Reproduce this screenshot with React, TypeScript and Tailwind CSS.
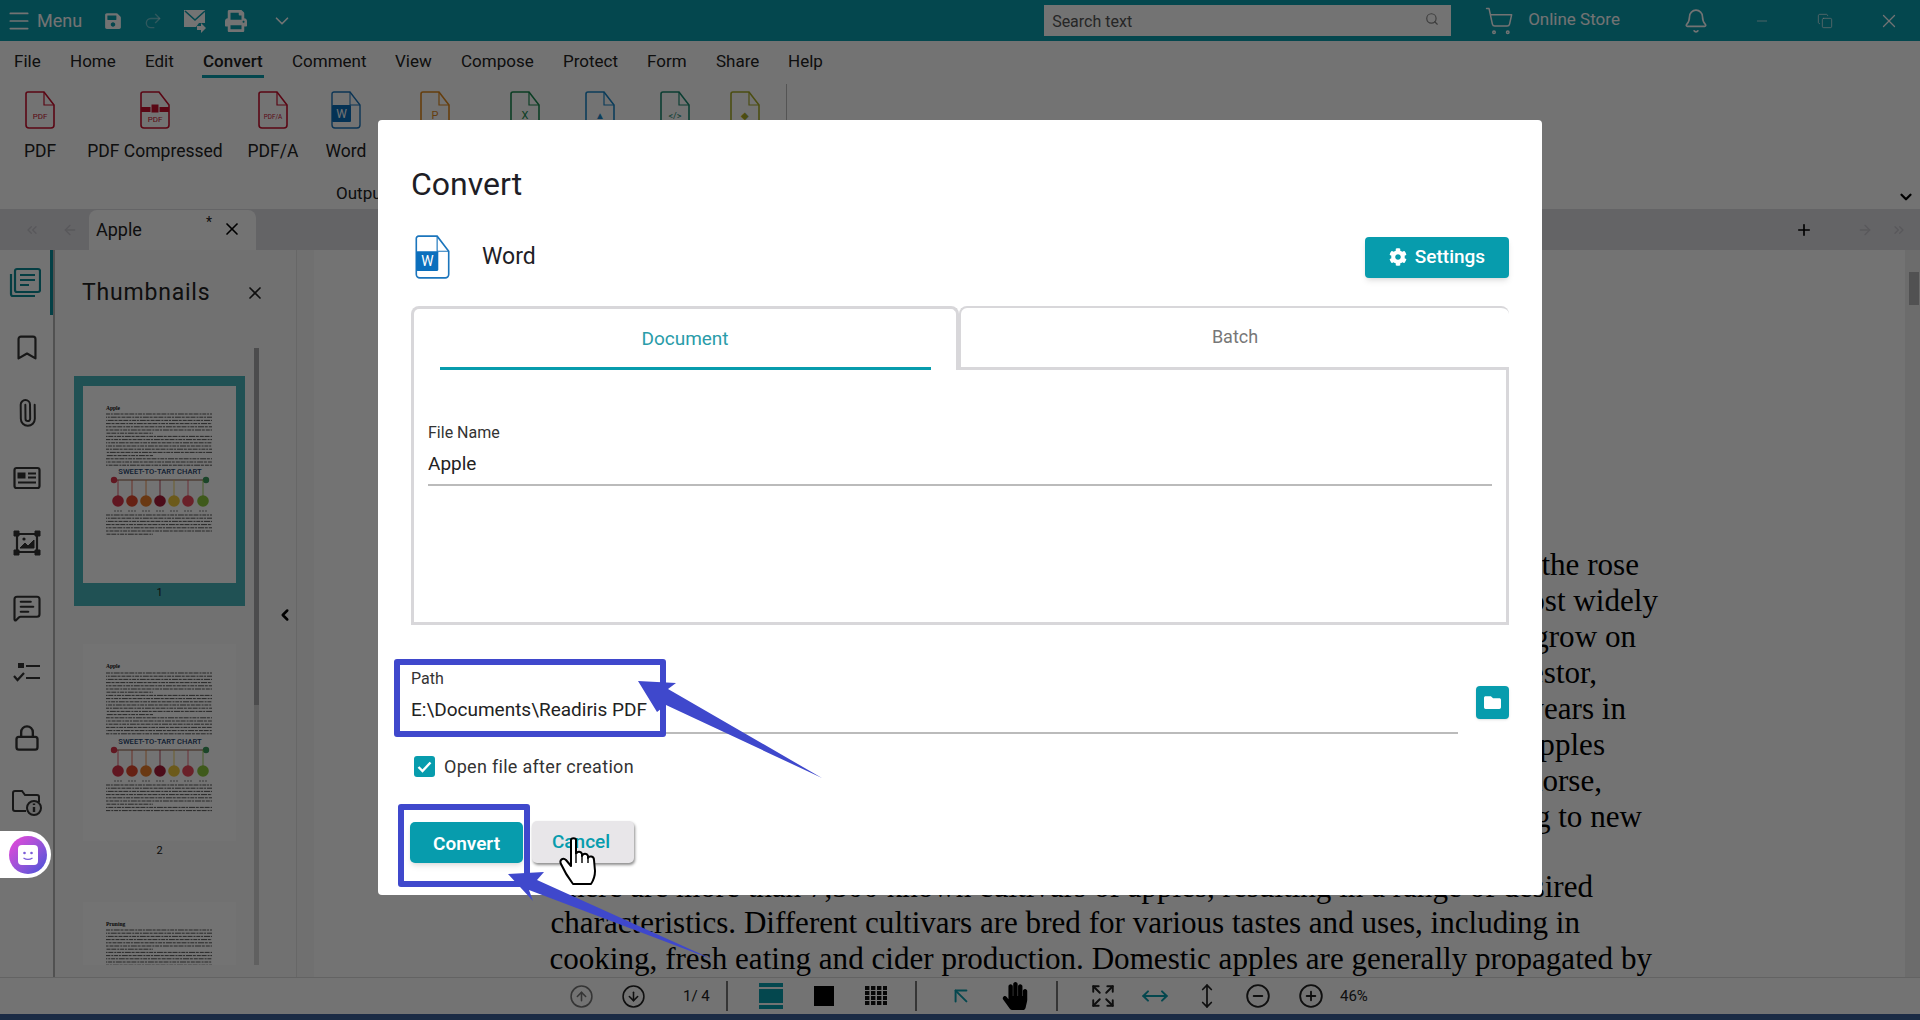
import { Bell, Bookmark, ChevronDown, ChevronLeft, ChevronsLeft, ChevronsRight, ArrowLeft, ArrowRight, ArrowUpLeft, CircleArrowDown, CircleArrowUp, CircleMinus, CirclePlus, Copy, Expand, Lock, Menu, MessageSquareText, Minus, MoveHorizontal, MoveVertical, Paperclip, Plus, Redo2, Search, ShoppingCart, X } from "lucide-react";
import { FaCog, FaFolder, FaHandPaper, FaPrint, FaSave } from "react-icons/fa";

const menuItems = [
  { label: "File", cls: "w-[56px]" },
  { label: "Home", cls: "w-[75px]" },
  { label: "Edit", cls: "w-[58px]" },
  { label: "Convert", cls: "w-[89px]", active: true },
  { label: "Comment", cls: "w-[103px]" },
  { label: "View", cls: "w-[66px]" },
  { label: "Compose", cls: "w-[102px]" },
  { label: "Protect", cls: "w-[84px]" },
  { label: "Form", cls: "w-[69px]" },
  { label: "Share", cls: "w-[72px]" },
  { label: "Help", cls: "w-[50px]" },
];

function FileIcon({ color, mark, size = 7 }: { color: string; mark: string; size?: number }) {
  return (
    <svg width="30" height="38" viewBox="0 0 30 38" fill="none">
      <path d="M3 1h16l10 13v20a3 3 0 0 1-3 3H4a3 3 0 0 1-3-3V3a2 2 0 0 1 2-2z" stroke={color} strokeWidth="1.6" fill="white" />
      <path d="M19 1v13h10" stroke={color} strokeWidth="1.2" />
      <text x="15" y="28" textAnchor="middle" fontSize={size} fontFamily="Roboto, sans-serif" fill={color}>{mark}</text>
    </svg>
  );
}

function WordIcon({ w = 30, h = 38 }: { w?: number; h?: number }) {
  return (
    <svg width={w} height={h} viewBox="0 0 30 38" fill="none">
      <path d="M3 1h16l10 13v20a3 3 0 0 1-3 3H4a3 3 0 0 1-3-3V3a2 2 0 0 1 2-2z" stroke="#1b75bc" strokeWidth="1.4" fill="white" />
      <path d="M19 1v13h10" stroke="#1b75bc" strokeWidth="1" />
      <rect x="1" y="14" width="19" height="17" rx="1" fill="#0b6fbd" />
      <text x="10.5" y="27" textAnchor="middle" fontSize="12" fontFamily="Roboto, sans-serif" fill="white">W</text>
    </svg>
  );
}

function RibbonItem({ cls, label, children }: { cls: string; label?: string; children: React.ReactNode }) {
  return (
    <div className={`${cls} flex flex-col items-center`}>
      {children}
      {label && <span className="mt-[10px] text-[17.5px] leading-[24px] whitespace-nowrap text-[#222]">{label}</span>}
    </div>
  );
}

function NewsIcon() {
  return (
    <svg width="28" height="24" viewBox="0 0 28 24" fill="none" stroke="#333" strokeWidth="2.2">
      <rect x="1.5" y="2" width="25" height="20" rx="2" />
      <rect x="5" y="7" width="7" height="5" fill="#333" strokeWidth="1" />
      <path d="M15 7.5h8M15 11.5h8M5 16.5h18" />
    </svg>
  );
}

function FrameIcon() {
  return (
    <svg width="28" height="28" viewBox="0 0 28 28" fill="none" stroke="#333" strokeWidth="2.2">
      <path d="M4 5h20v18H4z" />
      <path d="M1 2h5v5H1zM22 2h5v5h-5zM1 21h5v5H1zM22 21h5v5h-5z" fill="#333" strokeWidth="1" />
      <path d="M7 19l5-5 3 3 6-6v8z" fill="#333" strokeWidth="1" />
      <circle cx="11" cy="10" r="1.6" fill="#333" strokeWidth="0" />
    </svg>
  );
}

function ChecklistIcon() {
  return (
    <svg width="28" height="24" viewBox="0 0 28 24" fill="none" stroke="#333" strokeWidth="2.2">
      <rect x="5" y="2" width="6" height="5" fill="#333" strokeWidth="0" />
      <path d="M1 15l3.5 4L11 12M13 5h14M13 17h14" />
    </svg>
  );
}

function FolderInfoIcon() {
  return (
    <svg width="30" height="26" viewBox="0 0 30 26" fill="none" stroke="#333" strokeWidth="2">
      <path d="M14 21H3a2 2 0 0 1-2-2V3a2 2 0 0 1 2-2h7l3 4h12a2 2 0 0 1 2 2v5" />
      <circle cx="22" cy="18" r="7" fill="#eee" />
      <path d="M22 17v5M22 13.5v1.6" strokeWidth="2.4" />
    </svg>
  );
}

function StackIcon() {
  return (
    <svg width="32" height="32" viewBox="0 0 32 32" fill="none" stroke="#0c8a95" strokeWidth="2.2">
      <path d="M2 7v20a2 2 0 0 0 2 2h22" />
      <rect x="6" y="2" width="25" height="23" rx="2" />
      <path d="M11 8h15M11 13h15M11 18h9" />
    </svg>
  );
}

const appleColors = ["#d8344a", "#e2492c", "#ec7f2a", "#a81c38", "#f0c83c", "#ea4a5c", "#8cc83c"];
const appleX = [35, 49, 63, 77, 91, 105, 120];
const rowDash = "4 .8 2 .9 6 .8 3 1 4 .8 5 1 2 .8";

function TextRows({ from, to }: { from: number; to: number }) {
  const rows: number[] = [];
  for (let y = from; y <= to; y += 3.2) rows.push(y);
  return (
    <>
      {rows.map((y, i) => (
        <line key={y} x1="23" x2={i % 7 === 6 ? 70 : 129} y1={y} y2={y} stroke="#444" strokeWidth="0.9" strokeDasharray={rowDash} strokeDashoffset={i * 3} />
      ))}
    </>
  );
}

function PageThumb({ title, rows, chart, lower }: { title: string; rows: [number, number]; chart?: number; lower?: [number, number] }) {
  return (
    <svg width="153" height="197" viewBox="0 0 153 197" className="bg-white block">
      <text x="23" y="24" fontSize="5.5" fontWeight="700" fontFamily="Liberation Serif, serif" fill="#111">{title}</text>
      <TextRows from={rows[0]} to={rows[1]} />
      {chart !== undefined && (
        <g>
          <text x="77" y={chart} textAnchor="middle" fontSize="7.6" fontWeight="500" fontFamily="Roboto, sans-serif" fill="#27456e">SWEET-TO-TART CHART</text>
          <line x1="32" x2="122" y1={chart + 6} y2={chart + 6} stroke="#8a5a3c" strokeWidth="1.2" />
          <circle cx="31" cy={chart + 6} r="3.2" fill="#d8344a" />
          <circle cx="123" cy={chart + 6} r="3.2" fill="#3c9a5c" />
          {appleX.map((x, i) => (
            <g key={x}>
              <line x1={x} x2={x} y1={chart + 6} y2={chart + 22} stroke={appleColors[i]} strokeWidth="0.8" />
              <circle cx={x} cy={chart + 27} r="5.8" fill={appleColors[i]} />
              <line x1={x - 4} x2={x + 4} y1={chart + 37} y2={chart + 37} stroke="#666" strokeWidth="0.8" strokeDasharray="2 1" />
            </g>
          ))}
        </g>
      )}
      {lower && <TextRows from={lower[0]} to={lower[1]} />}
    </svg>
  );
}

const docLines = [
  { text: "An apple is a round, edible fruit produced by an apple tree, a member of the rose", cls: "pr-[266px]" },
  { text: "family. Apple trees are cultivated worldwide and are the most widely", cls: "pr-[247px]" },
  { text: "grown species in the genus Malus. The trees can grow on", cls: "pr-[269px]" },
  { text: "originated in Central Asia, where its wild ancestor,", cls: "pr-[308px]" },
  { text: "Malus sieversii, is still found. Apples have been grown for thousands of years in", cls: "pr-[279px]" },
  { text: "Eurasia before they were introduced to North America. Apples", cls: "pr-[300px]" },
  { text: "have religious significance in Norse, Greek and other lore, even the horse,", cls: "pr-[303px]" },
  { text: "and were brought by European colonists, adapting to new", cls: "pr-[263px]" },
];

const docLower = [
  { text: "There are more than 7,500 known cultivars of apples, resulting in a range of desired", cls: "pr-[312px]" },
  { text: "characteristics. Different cultivars are bred for various tastes and uses, including in", cls: "pr-[325px]" },
  { text: "cooking, fresh eating and cider production. Domestic apples are generally propagated by", cls: "pr-[253px]" },
];

function Sep() {
  return <div className="h-[30px] w-[2px] bg-[#777]" />;
}

export default function App() {
  return (
    <div className="relative flex h-[1020px] w-[1920px] flex-col overflow-hidden bg-white font-['Roboto',sans-serif] text-[#222]">
      {/* title bar */}
      <div className="flex h-[41px] shrink-0 items-center bg-[#0a9dae] text-white">
        <Menu className="ml-[6px] h-[26px] w-[26px]" strokeWidth={1.6} />
        <span className="ml-[5px] text-[18px]">Menu</span>
        <FaSave className="ml-[22px] text-[18px]" />
        <Redo2 className="ml-[21px] h-[20px] w-[20px] text-white/40" strokeWidth={1.6} />
        <svg className="ml-[21px]" width="22" height="24" viewBox="0 0 22 24" fill="white">
          <path d="M0 1h21v13h-6l-3 4H0z" />
          <path d="M1 2l10 9 10-9" fill="none" stroke="#0a9dae" strokeWidth="1.6" />
          <path d="M13 17h4v-3l5 5-5 5v-3h-4z" />
        </svg>
        <FaPrint className="ml-[19px] text-[22px]" />
        <ChevronDown className="ml-[24px] h-[22px] w-[22px]" strokeWidth={1.8} />
        <div className="ml-[751px] flex h-[31px] w-[407px] items-center justify-between bg-white pl-[8px] pr-[12px] pt-[3px] text-[16px] text-[#555]">
          <span>Search text</span>
          <Search className="mb-[6px] h-[14px] w-[14px] text-[#888]" />
        </div>
        <ShoppingCart className="ml-[33px] h-[30px] w-[30px]" strokeWidth={1.2} />
        <span className="mb-[1px] ml-[14px] text-[17px]">Online Store</span>
        <Bell className="ml-[63px] h-[26px] w-[26px]" strokeWidth={1.5} />
        <Minus className="ml-[45px] h-[16px] w-[16px] text-white/70" strokeWidth={1.4} />
        <Copy className="ml-[47px] h-[16px] w-[16px] text-white/70" strokeWidth={1.4} />
        <X className="ml-[45px] h-[22px] w-[22px]" strokeWidth={1.4} />
      </div>

      {/* menu tabs */}
      <div className="flex h-[37px] shrink-0 pl-[14px] text-[17px] text-[#222]">
        {menuItems.map((m) => (
          <div key={m.label} className={`${m.cls} flex h-full`}>
            <span className={m.active ? "-ml-[1px] h-full border-b-[3px] border-[#0a9dae] px-[1px] pt-[8px] font-medium" : "pt-[8px]"}>{m.label}</span>
          </div>
        ))}
      </div>

      {/* ribbon */}
      <div className="flex h-[131px] shrink-0 flex-col">
        <div className="flex h-[94px] items-start pt-[13px]">
          <RibbonItem cls="w-[80px]" label="PDF"><FileIcon color="#c8102e" mark="PDF" size={8} /></RibbonItem>
          <RibbonItem cls="w-[150px]" label="PDF Compressed">
            <svg width="30" height="38" viewBox="0 0 30 38" fill="none">
              <path d="M3 1h16l10 13v20a3 3 0 0 1-3 3H4a3 3 0 0 1-3-3V3a2 2 0 0 1 2-2z" stroke="#c8102e" strokeWidth="1.6" fill="white" />
              <path d="M1 16h28v5H1z" fill="#c8102e" />
              <rect x="11" y="13" width="8" height="9" fill="#c8102e" stroke="white" strokeWidth="1" />
              <text x="15" y="31" textAnchor="middle" fontSize="8" fontFamily="Roboto, sans-serif" fill="#c8102e">PDF</text>
            </svg>
          </RibbonItem>
          <RibbonItem cls="w-[86px]" label="PDF/A"><FileIcon color="#c8102e" mark="PDF/A" size={6.4} /></RibbonItem>
          <RibbonItem cls="w-[60px]" label="Word"><WordIcon /></RibbonItem>
          <RibbonItem cls="w-[118px]"><FileIcon color="#e08a1e" mark="P" size={11} /></RibbonItem>
          <RibbonItem cls="w-[62px]"><FileIcon color="#1a8a50" mark="X" size={11} /></RibbonItem>
          <RibbonItem cls="w-[88px]"><FileIcon color="#1b86c8" mark="▲" size={10} /></RibbonItem>
          <RibbonItem cls="w-[62px]"><FileIcon color="#1a8a70" mark="</>" size={9} /></RibbonItem>
          <RibbonItem cls="w-[78px]"><FileIcon color="#a8ac28" mark="◆" size={10} /></RibbonItem>
          <div className="ml-[2px] mt-[-7px] h-[50px] w-[1px] bg-[#bbb]" />
        </div>
        <div className="flex flex-1 items-end justify-between pb-[1px] pl-[336px] pr-[5px] text-[17px]">
          <span className="pb-[2px]">Output</span>
          <ChevronDown className="mb-[2px] h-[18px] w-[18px] text-black" strokeWidth={3} />
        </div>
      </div>

      {/* document tabs */}
      <div className="flex h-[41px] shrink-0 items-end justify-between bg-[#dedde3]">
        <div className="flex items-end">
          <ChevronsLeft className="mb-[12px] ml-[24px] h-[16px] w-[16px] text-[#c4c3c9]" />
          <ArrowLeft className="mb-[12px] ml-[22px] h-[16px] w-[16px] text-[#c4c3c9]" />
          <div className="ml-[11px] flex h-[40px] w-[167px] items-center rounded-t-[8px] bg-white pb-[2px] pl-[7px]">
            <span className="text-[18px]">Apple</span>
            <span className="mb-[14px] ml-[64px] text-[14px]">*</span>
            <X className="ml-[10px] h-[20px] w-[20px] text-black" strokeWidth={2} />
          </div>
        </div>
        <div className="flex items-center pb-[11px] pr-[13px]">
          <Plus className="h-[18px] w-[18px] text-black" strokeWidth={2.2} />
          <ArrowRight className="ml-[44px] h-[16px] w-[16px] text-[#c4c3c9]" />
          <ChevronsRight className="ml-[18px] h-[16px] w-[16px] text-[#c4c3c9]" />
        </div>
      </div>

      {/* main */}
      <div className="flex min-h-0 flex-1">
        <div className="flex w-[55px] shrink-0 flex-col border-r-2 border-[#b4b4b4] pl-[1px] text-[#333]">
          <div className="flex h-[65px] items-center justify-center border-r-[3px] border-[#0a8f9c] pr-[1px]"><StackIcon /></div>
          <div className="flex h-[65px] items-center justify-center"><Bookmark className="h-[29px] w-[32px]" strokeWidth={1.8} /></div>
          <div className="flex h-[65px] items-center justify-center"><Paperclip className="h-[28px] w-[28px] -rotate-45" strokeWidth={1.7} /></div>
          <div className="flex h-[65px] items-center justify-center"><NewsIcon /></div>
          <div className="flex h-[65px] items-center justify-center"><FrameIcon /></div>
          <div className="flex h-[65px] items-center justify-center"><MessageSquareText className="h-[30px] w-[30px]" strokeWidth={1.7} /></div>
          <div className="flex h-[65px] items-center justify-center"><ChecklistIcon /></div>
          <div className="flex h-[65px] items-center justify-center"><Lock className="h-[28px] w-[28px]" strokeWidth={2} /></div>
          <div className="flex h-[65px] items-center justify-center"><FolderInfoIcon /></div>
        </div>

        <div className="flex w-[242px] shrink-0 flex-col border-r border-[#e4e4e4] bg-[#fbfbfb]">
          <div className="flex h-[82px] shrink-0 items-center justify-between pl-[27px] pr-[31px] pt-[4px]">
            <span className="text-[23px] tracking-[0.8px] text-[#222]">Thumbnails</span>
            <X className="h-[20px] w-[20px] text-[#222]" strokeWidth={2} />
          </div>
          <div className="flex min-h-0 flex-1">
            <div className="flex h-[633px] w-[199px] shrink-0 flex-col gap-[28px] overflow-hidden pl-[19px] pt-[44px]">
              <div className="h-[230px] w-[171px] shrink-0 bg-[#48b4ba] px-[9px] pt-[10px]">
                <PageThumb title="Apple" rows={[28, 80]} chart={88} lower={[129, 151]} />
                <div className="text-center text-[11px] leading-[19px] text-[#222]">1</div>
              </div>
              <div className="h-[230px] w-[171px] shrink-0 px-[9px] pt-[10px]">
                <PageThumb title="Apple" rows={[29, 91]} chart={100} lower={[141, 169]} />
                <div className="text-center text-[11px] leading-[19px] text-[#222]">2</div>
              </div>
              <div className="h-[230px] w-[171px] shrink-0 px-[9px] pt-[10px]">
                <PageThumb title="Pruning" rows={[28, 70]} />
              </div>
            </div>
            <div className="mt-[16px] h-[617px] w-[5px] shrink-0 bg-[#d4d4d6]">
              <div className="h-[357px] w-full bg-[#a8a8ac]" />
            </div>
            <div className="pl-[17px] pt-[271px]">
              <ChevronLeft className="h-[24px] w-[18px] text-black" strokeWidth={3.4} />
            </div>
          </div>
        </div>

        <div className="flex min-w-0 flex-1">
          <div className="w-[17px] shrink-0 bg-[#f8f8f8]" />
          <div className="flex min-w-0 flex-1 flex-col overflow-hidden pt-[297px] font-['Liberation_Serif',serif] text-[31.1px] leading-[36px] text-black">
            {docLines.map((l) => (
              <div key={l.text} className={`flex h-[36px] shrink-0 justify-end whitespace-nowrap ${l.cls}`}>{l.text}</div>
            ))}
            <div className="h-[34px] shrink-0" />
            {docLower.map((l) => (
              <div key={l.text} className={`flex h-[36px] shrink-0 justify-end whitespace-nowrap ${l.cls}`}>{l.text}</div>
            ))}
          </div>
          <div className="w-[15px] shrink-0 bg-[#f0f0f0] pl-[4px] pt-[22px]">
            <div className="h-[33px] w-[10px] bg-[#b4b4b6]" />
          </div>
        </div>
      </div>

      {/* bottom toolbar */}
      <div className="flex h-[37px] shrink-0 items-center border-t border-[#dcdcdc] pl-[569px] text-[#222]">
        <CircleArrowUp className="h-[25px] w-[25px] text-[#777]" strokeWidth={1.5} />
        <CircleArrowDown className="ml-[27px] h-[25px] w-[25px]" strokeWidth={1.5} />
        <span className="ml-[37px] w-[43px] text-[15px]">1/ 4</span>
        <Sep />
        <svg className="ml-[31px]" width="24" height="26" viewBox="0 0 24 26" fill="#0a9dae">
          <rect width="24" height="4" />
          <rect y="6" width="24" height="14" />
          <rect y="22" width="24" height="4" />
        </svg>
        <div className="ml-[31px] h-[20px] w-[20px] bg-black" />
        <svg className="ml-[31px]" width="22" height="20" viewBox="0 0 22 20" fill="#111">
          {[0, 5, 10, 15].flatMap((y) => [0, 6, 12, 18].map((x) => <rect key={`${x}-${y}`} x={x} y={y} width="4.4" height="4" />))}
        </svg>
        <div className="ml-[28px]"><Sep /></div>
        <ArrowUpLeft className="ml-[31px] h-[26px] w-[26px] text-[#0a9dae]" strokeWidth={1.8} />
        <FaHandPaper className="ml-[27px] text-[28px] text-black" />
        <div className="ml-[27px]"><Sep /></div>
        <Expand className="ml-[32px] h-[26px] w-[26px]" strokeWidth={1.8} />
        <MoveHorizontal className="ml-[24px] h-[28px] w-[30px] text-[#0a9dae]" strokeWidth={1.7} />
        <MoveVertical className="ml-[24px] h-[32px] w-[26px]" strokeWidth={1.6} />
        <CircleMinus className="ml-[25px] h-[26px] w-[26px]" strokeWidth={1.7} />
        <CirclePlus className="ml-[27px] h-[26px] w-[26px]" strokeWidth={1.7} />
        <span className="ml-[16px] text-[15px]">46%</span>
      </div>
      <div className="h-[6px] shrink-0 bg-[#3d6199]" />

      {/* dim overlay */}
      <div className="absolute inset-0 bg-black/55" />

      {/* assistant bubble */}
      <div className="absolute left-0 top-[831px] flex h-[47px] w-[51px] items-center justify-end rounded-r-full bg-white pr-[4px]">
        <div className="flex h-[38px] w-[38px] items-center justify-center rounded-full bg-linear-to-br from-[#ee3fd8] to-[#3d4fd8]">
          <svg width="20" height="20" viewBox="0 0 20 20">
            <rect width="20" height="20" rx="4" fill="white" />
            <circle cx="6.5" cy="8" r="1.3" fill="#7a5ad8" />
            <circle cx="13.5" cy="8" r="1.3" fill="#7a5ad8" />
            <path d="M5.5 13c2.5 1.6 6.5 1.6 9 0" stroke="#7a5ad8" strokeWidth="1.3" fill="none" />
          </svg>
        </div>
      </div>

      {/* convert dialog */}
      <div className="absolute left-[378px] top-[120px] flex h-[775px] w-[1164px] flex-col rounded-[4px] bg-white px-[33px] pt-[44px] text-[#222]">
        <h2 className="text-[32px] leading-[40px] text-[#1e1e26]">Convert</h2>
        <div className="mt-[31px] flex h-[44px] items-center justify-between">
          <div className="flex items-center">
            <span className="ml-[4px]"><WordIcon w={35} h={44} /></span>
            <span className="ml-[32px] text-[23px] text-[#1e1e26]">Word</span>
          </div>
          <button className="flex h-[41px] w-[144px] items-center justify-center gap-[8px] rounded-[4px] bg-[#079cad] text-[19px] font-medium text-white shadow-md">
            <FaCog className="text-[18px]" />
            Settings
          </button>
        </div>

        <div className="mt-[27px] flex h-[64px] items-end">
          <div className="flex h-[64px] w-[548px] flex-col items-center rounded-t-[8px] border-x-[3px] border-t-[3px] border-[#d8d7da]">
            <div className="flex h-[61px] w-[491px] items-center justify-center border-b-[3px] border-[#079cad] pt-[2px] text-[19px] text-[#2a9ca9]">Document</div>
          </div>
          <div className="flex h-[64px] flex-1 items-center justify-center rounded-t-[8px] border-b-[3px] border-l-[2px] border-t-[2px] border-[#d8d7da] pb-[2px] text-[18px] text-[#777]">Batch</div>
        </div>
        <div className="h-[255px] border-x-[3px] border-b-[3px] border-[#d8d7da] px-[14px] pt-[51px]">
          <div className="text-[16px] leading-[24px] text-[#333]">File Name</div>
          <div className="mt-[7px] border-b-2 border-[#bbb] pb-[8px] text-[19px] leading-[24px] text-[#222]">Apple</div>
        </div>

        <div className="mt-[43px] flex items-start gap-[18px]">
          <div className="flex-1 border-b-2 border-[#bbb] pb-[9px]">
            <div className="text-[16px] leading-[22px] text-[#333]">Path</div>
            <div className="mt-[7px] text-[19px] leading-[26px] text-[#222]">E:\Documents\Readiris PDF</div>
          </div>
          <button className="mt-[18px] flex h-[33px] w-[33px] items-center justify-center rounded-[4px] bg-[#079cad] text-white shadow-sm">
            <FaFolder className="text-[17px]" />
          </button>
        </div>

        <div className="ml-[3px] mt-[22px] flex items-center gap-[9px]">
          <span className="flex h-[21px] w-[21px] items-center justify-center rounded-[3px] bg-[#079cad]">
            <svg width="15" height="12" viewBox="0 0 15 12" fill="none" stroke="white" strokeWidth="2.4"><path d="M1.5 6l4 4 8-8.5" /></svg>
          </span>
          <span className="text-[18px] leading-[21px] tracking-[0.3px] text-[#333]">Open file after creation</span>
        </div>

        <div className="-ml-[1px] mt-[45px] flex items-start gap-[9px]">
          <button className="h-[41px] w-[113px] rounded-[5px] bg-[#079cad] pt-[3px] text-[19px] font-semibold text-white shadow-md">Convert</button>
          <button className="-mt-[1px] h-[42px] w-[102px] rounded-[5px] bg-[#e8e6e9] pr-[4px] text-[19px] font-medium text-[#079cad] shadow-[1px_2px_3px_rgba(0,0,0,0.45)]">Cancel</button>
        </div>
      </div>

      {/* tutorial annotations */}
      <div className="absolute left-[394px] top-[659px] h-[78px] w-[272px] rounded-[3px] border-[6px] border-[#3f48cc]" />
      <div className="absolute left-[398px] top-[804px] h-[83px] w-[132px] rounded-[3px] border-[6px] border-[#3f48cc]" />
      <svg className="absolute inset-0" width="1920" height="1020" viewBox="0 0 1920 1020" fill="#3f48cc">
        <polygon points="638,681 676,683 668,689 822,778 666,705 657,712" />
        <polygon points="508,874 544,872 537,880 714,960 529,890 533,901" />
      </svg>
      <svg className="absolute left-[559px] top-[837px]" width="38" height="48" viewBox="0 0 38 48" fill="white" stroke="black" strokeWidth="2" strokeLinejoin="round">
        <path d="M12 3C12 .5 17 .5 17 3V17C18 14 22 14 23 17V19C24 16 28 16 29 19V21C30 18.5 35 19 35 23L36 34C36 40 34 44 32 47H14C11 43 6 36 2 27C0 23 4 20 7 23L12 29Z" />
        <path d="M17 18V26M23 19V26M29 21V26" fill="none" strokeWidth="1.4" />
      </svg>
    </div>
  );
}
